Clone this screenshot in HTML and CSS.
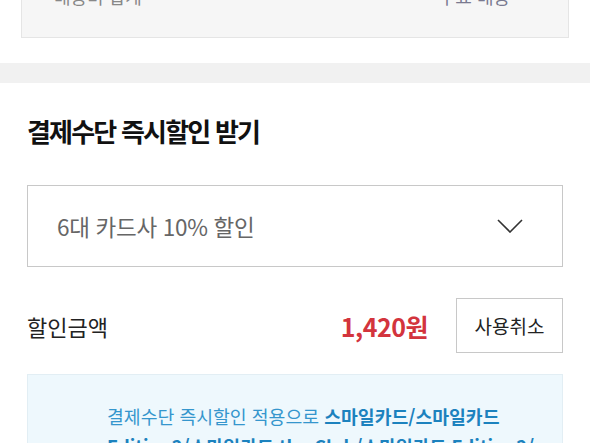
FILE: index.html
```html
<!DOCTYPE html>
<html lang="ko">
<head>
    <meta charset="UTF-8">
    <meta name="viewport" content="width=device-width, initial-scale=1.0">
    <title>결제수단 즉시할인</title>
    <link rel="stylesheet" href="styles.css">
</head>
<body>
    <div class="summary">
        <div class="summary-box">
            <span class="summary-label">배송비 합계</span>
            <span class="summary-value">무료 배송</span>
        </div>
    </div>

    <div class="divider"></div>

    <section class="discount">
        <h2 class="discount-title">결제수단 즉시할인 받기</h2>

        <div class="select-box">
            <span class="select-text">6대 카드사 10% 할인</span>
            <svg class="select-arrow" width="26" height="14" viewBox="0 0 26 14">
                <path d="M1 1 L13 13 L25 1" fill="none" stroke="#333" stroke-width="1.6"/>
            </svg>
        </div>

        <div class="amount-row">
            <span class="amount-label">할인금액</span>
            <span class="amount-value">1,420원</span>
            <button class="cancel-btn" type="button">사용취소</button>
        </div>

        <div class="info-box">
            <p>결제수단 즉시할인 적용으로 <strong>스마일카드/스마일카드 Edition2/스마일카드 the Club/스마일카드 Edition2/</strong> 결제 시 할인이 적용됩니다.</p>
        </div>
    </section>
</body>
</html>
```

FILE: styles.css
```css
body {
    margin: 0;
    padding: 0;
    font-family: "Noto Sans CJK KR", "Noto Sans", sans-serif;
    background: #fff;
    color: #222;
    overflow: hidden;
}

.summary {
    padding: 0 21px 25px;
}

.summary-box {
    display: flex;
    justify-content: space-between;
    margin-top: -37px;
    padding: 18px 58px 27px 32px;
    background: #f6f6f6;
    border: 1px solid #e5e5e5;
    font-size: 18px;
    line-height: 28px;
    color: #888;
}

.summary-value {
    color: #7a7a90;
}

.divider {
    height: 20px;
    background: #f1f1f1;
}

.discount {
    padding: 30px 27px 0;
}

.discount-title {
    margin: 0 0 36px;
    font-size: 26px;
    line-height: 36px;
    font-weight: 700;
    color: #111;
    letter-spacing: -1.8px;
}

.select-box {
    display: flex;
    align-items: center;
    justify-content: space-between;
    height: 80px;
    padding: 0 39px 0 29px;
    border: 1px solid #c8c8c8;
}

.select-text {
    font-size: 22.5px;
    color: #666;
    letter-spacing: -0.3px;
}

.amount-row {
    display: flex;
    align-items: center;
    margin-top: 31px;
}

.amount-label {
    flex: 1;
    font-size: 22px;
    color: #222;
}

.amount-value {
    margin-right: 28px;
    font-size: 25px;
    font-weight: 700;
    color: #d3343d;
    letter-spacing: -0.5px;
}

.cancel-btn {
    width: 107px;
    height: 55px;
    padding: 0;
    background: #fff;
    border: 1px solid #c8c8c8;
    font-family: inherit;
    font-size: 19px;
    color: #222;
}

.info-box {
    margin-top: 21px;
    padding: 26px 8px 20px 79px;
    background: #eef8fd;
    border: 1px solid #e2eef4;
}

.info-box p {
    margin: 0;
    font-size: 18.3px;
    line-height: 30px;
    color: #3596cd;
    word-break: keep-all;
}

.info-box strong {
    color: #1c82be;
}
```
